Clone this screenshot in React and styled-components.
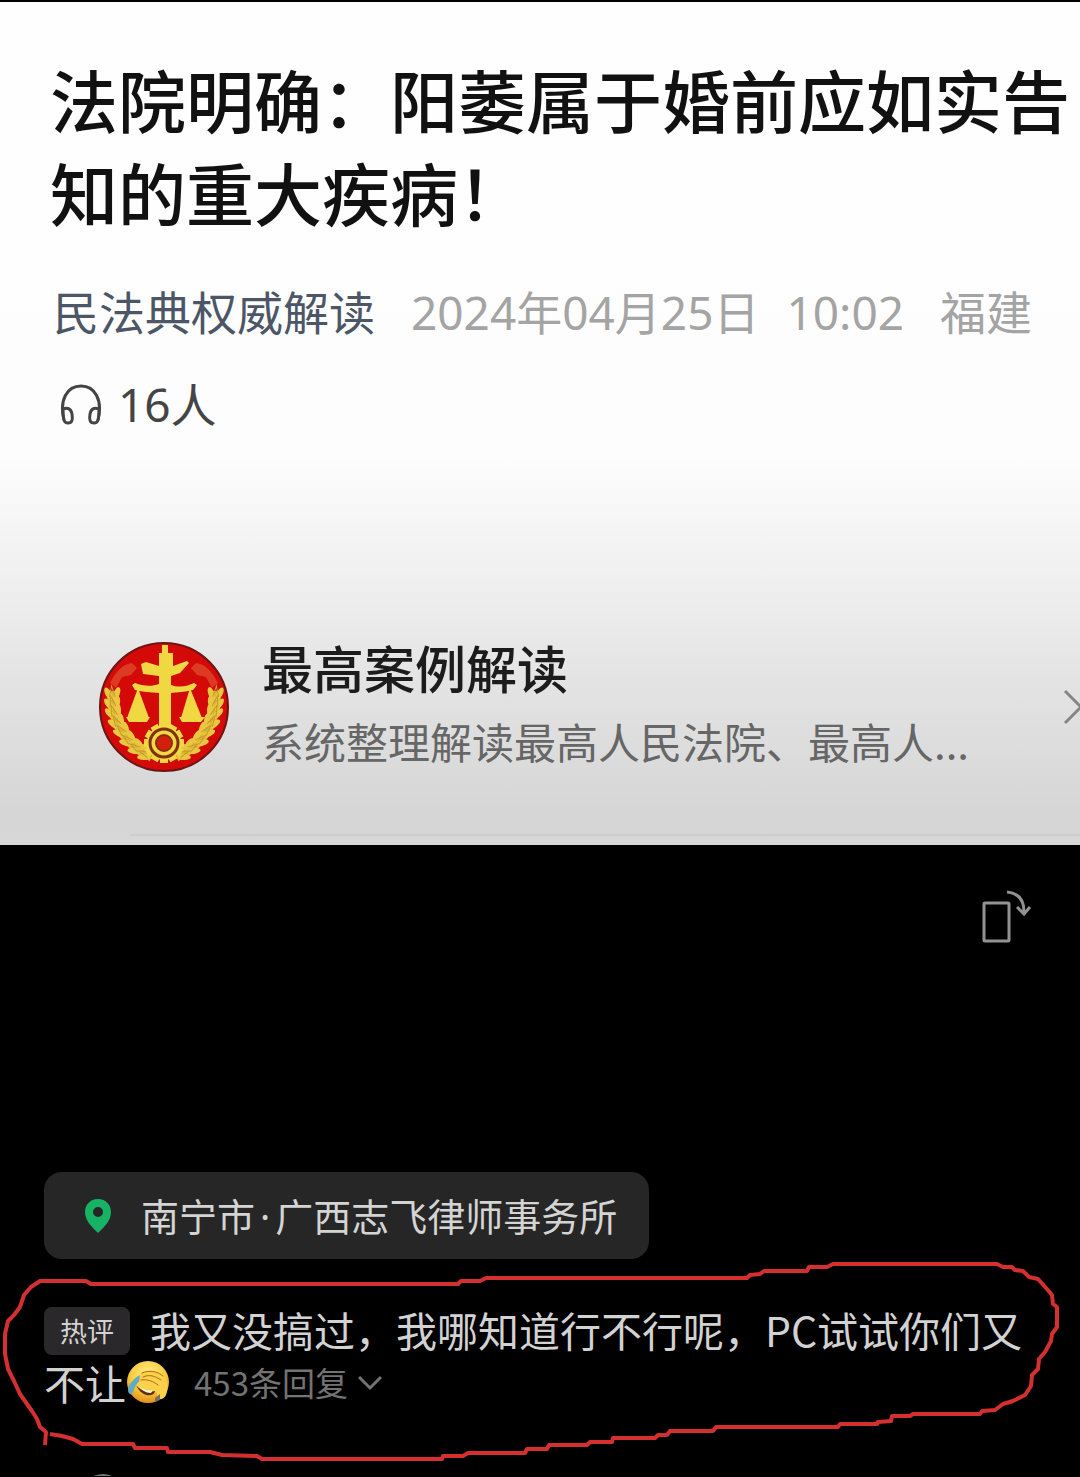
import styled, { createGlobalStyle } from 'styled-components';

function Emblem() {
    const leaves = [
        [14, 51, -4], [14, 61, -12], [15, 70, -20], [18, 80, -30],
        [23, 89, -40], [29, 98, -50], [37, 106, -58], [46, 112, -68],
    ];
    const teeth = [0, 30, 60, 90, 120, 150, 180, 210, 240, 270, 300, 330];
    const wheat = (
        <>
            <path d="M15 50C13 75 24 102 54 115" fill="none" stroke="#d9b236" strokeWidth="11" />
            {leaves.map(([x, y, r]) => (
                <g key={y} transform={`translate(${x} ${y}) rotate(${r})`}>
                    <ellipse cx="-4" cy="0" rx="3" ry="7" transform="rotate(-24)" />
                    <ellipse cx="5" cy="0" rx="3" ry="7" transform="rotate(24)" />
                    <path d="M-3 5L0 -6L3 5" fill="none" stroke="#c9982a" strokeWidth="1" />
                </g>
            ))}
        </>
    );
    return (
        <EmblemSvg viewBox="0 0 132 132" aria-hidden="true">
            <circle cx="66" cy="66" r="64" fill="#d30a08" stroke="#6d1414" strokeWidth="2" />
            <path d="M12 42C18 30 25 23 34 22L39 27L33 34L24 36L18 47Z" fill="#dc3a22" />
            <path d="M120 42C114 30 107 23 98 22L93 27L99 34L108 36L114 47Z" fill="#dc3a22" />
            <g fill="#e8c840">
                {wheat}
                <g transform="translate(132 0) scale(-1 1)">{wheat}</g>
            </g>
            <g fill="#f0d843">
                <path d="M64 4H70V12H75V25L89 20L91 22L82 32L73 35V44C82 47 90 45 96 42L99 44L95 49C87 51 79 51 73 52V90H61V52C53 51 44 51 37 49L34 44L37 42C45 45 53 46 61 43V35L45 33L43 23L48 21L61 25V12H64Z" />
                <path d="M40 47L51 77H29Z" />
                <path d="M92 47L104 77H83Z" />
                <path d="M28 76H52L49 81H31Z" />
                <path d="M81 76H107L103 81H84Z" />
            </g>
            <g fill="#f0d843">
                {teeth.map((a) => (
                    <rect key={a} x="62" y="82" width="8" height="8" transform={`rotate(${a} 66 102)`} />
                ))}
                <circle cx="66" cy="102" r="17" />
            </g>
            <circle cx="66" cy="102" r="14" fill="none" stroke="#80300f" strokeWidth="3" />
            <circle cx="66" cy="102" r="8" fill="#d3200c" stroke="#8c2b10" strokeWidth="2" />
        </EmblemSvg>
    );
}

function FacepalmEmoji() {
    return (
        <EmojiSvg viewBox="0 0 44 44" role="img" aria-label="捂脸">
            <defs>
                <radialGradient id="face" cx="50%" cy="30%" r="70%">
                    <stop offset="0" stopColor="#ffec83" />
                    <stop offset="0.6" stopColor="#f9cb3d" />
                    <stop offset="1" stopColor="#e48e1b" />
                </radialGradient>
            </defs>
            <circle cx="22" cy="22" r="21" fill="url(#face)" />
            <path d="M10 25C14 30 20 33 29 31C28 38 15 37 10 25Z" fill="#5c2f0e" />
            <path d="M13 26C17 30 22 31 27 30L25 33C19 33 16 30 13 26Z" fill="#fff3d6" />
            <path d="M14 15C7 19 2 25 2 30C2 33 4 35 6 34L10 25L16 18Z" fill="#62a9c5" />
            <path d="M14 14C20 9 30 10 36 14C42 19 43 28 40 35C38 39 34 41 31 37C33 30 24 28 13 23Z" fill="#fbd04a" />
            <path d="M16 13C23 10 31 11 37 16M17 17C23 14 29 16 35 20M15 20C21 19 27 21 32 25" fill="none" stroke="#a86f1c" strokeWidth="1" strokeLinecap="round" />
            <path d="M29 38L34 34L34 40L29 42Z" fill="#77705a" />
        </EmojiSvg>
    );
}

function Scribble() {
    return (
        <ScribbleSvg viewBox="0 0 1080 217" preserveAspectRatio="none" aria-hidden="true">
            <path d="M45 186L46 173L40 168L37 160L32 152L27 145L20 135L14 122L8 110L5 95V75L8 62L14 56L20 48L24 36L31 28L40 22H86L91 25H458L461 22H480L486 19H747L750 16L760 15L764 12H807L809 8H827L833 5H997L1003 8H1012L1015 11L1023 12L1029 18L1038 20L1047 30L1052 36L1053 45L1057 48V68L1052 75L1051 82L1045 93L1039 100L1038 110L1032 116L1031 127L1025 136L1013 142L1003 145L995 151L982 152L980 155H913L910 157H892L891 162L878 163L877 165H840L838 168H716L713 172H670L667 176H658L655 179H613L612 183H590L587 186H549L547 190H527L525 194H468L463 197H443L442 200H262L257 197L222 196L210 193H168L167 189H135L133 185H82L73 180L62 177L50 175" />
        </ScribbleSvg>
    );
}

function Article() {
    return (
        <ArticleBox>
            <Title>法院明确：阳萎属于婚前应如实告知的重大疾病！</Title>
            <Meta>
                <Author href="#author">民法典权威解读</Author>
                <Time>
                    <span>2024年04月25日</span>
                    <span>10:02</span>
                </Time>
                <span>福建</span>
            </Meta>
            <Listen type="button">
                <svg width="42" height="42" viewBox="0 0 42 42" fill="none" stroke="currentColor" strokeWidth="3" aria-hidden="true">
                    <path d="M4 37C-1 17 7 3 21 3S43 17 38 37" />
                    <path d="M3 26C8 24 11 26 12 31C13 37 12 40 8 40C4 40 3 37 3 26Z" />
                    <path d="M39 26C34 24 31 26 30 31C29 37 30 40 34 40C38 40 39 37 39 26Z" />
                </svg>
                16人
            </Listen>
            <Album href="#album">
                <Emblem />
                <AlbumText>
                    <AlbumName>最高案例解读</AlbumName>
                    <AlbumDesc>系统整理解读最高人民法院、最高人...</AlbumDesc>
                </AlbumText>
                <svg width="18" height="36" viewBox="0 0 18 36" fill="none" stroke="#858585" strokeWidth="3" aria-hidden="true">
                    <path d="M3 2L19 18L3 34" />
                </svg>
            </Album>
            <Divider />
        </ArticleBox>
    );
}

function App() {
    return (
        <Page>
            <Global />
            <Article />
            <Viewer>
                <RotateButton type="button" aria-label="旋转">
                    <svg width="52" height="56" viewBox="0 0 52 56" fill="none" stroke="currentColor" strokeWidth="3" aria-hidden="true">
                        <rect x="4" y="14" width="25" height="38" rx="1" />
                        <path d="M27 3C38 4 44 11 44 23M37 18L44 25L50 18" />
                    </svg>
                </RotateButton>
                <Place href="#place">
                    <svg width="28" height="36" viewBox="0 0 28 36" aria-hidden="true">
                        <path fillRule="evenodd" fill="#17b263" d="M14 1C6 1 1 7 1 14C1 23 8 29 14 35C20 29 27 23 27 14C27 7 22 1 14 1ZM14 9A5 5 0 1 1 14 19A5 5 0 1 1 14 9Z" />
                    </svg>
                    <span>南宁市<Dot>·</Dot>广西志飞律师事务所</span>
                </Place>
            </Viewer>
            <CommentBox>
                <Comment>
                    <HotTag>热评</HotTag>
                    我又没搞过，我哪知道行不行呢，PC试试你们又不让
                    <FacepalmEmoji />
                    <Replies type="button">
                        453条回复
                        <svg width="24" height="16" viewBox="0 0 24 16" fill="none" stroke="currentColor" strokeWidth="3" aria-hidden="true">
                            <path d="M1 2L12 13L23 2" />
                        </svg>
                    </Replies>
                </Comment>
                <NextRow><NextAvatar /></NextRow>
                <Scribble />
            </CommentBox>
        </Page>
    );
}

const Global = createGlobalStyle`
    * { box-sizing: border-box; }
    body {
        margin: 0;
        background: #000;
        font-family: "Noto Sans CJK SC", sans-serif;
    }
    a { color: inherit; text-decoration: none; }
    button {
        padding: 0;
        border: 0;
        background: none;
        font-family: inherit;
    }
    svg { flex-shrink: 0; }
`

const Page = styled.div`
    border-top: 2px solid #000;
    overflow: hidden;
`

const ArticleBox = styled.article`
    padding: 50px 0 9px;
    background: linear-gradient(#fefefe 0, #fdfdfd 54%, #f2f2f2 66%, #e4e4e5 80%, #d7d6d6 96%, #d8d7d7 100%);
`

const Title = styled.h1`
    margin: 0;
    padding: 0 4px 0 50px;
    font-size: 68px;
    line-height: 93px;
    font-weight: 500;
    color: #111;
`

const Meta = styled.div`
    display: flex;
    align-items: baseline;
    gap: 36px;
    padding: 42px 0 0 53px;
    font-size: 46px;
    line-height: 60px;
    white-space: nowrap;
    color: #a4a4a4;
`

const Author = styled.a`
    color: #4c5666;
`

const Time = styled.time`
    display: flex;
    gap: 27px;
    font-family: "Noto Sans", "Noto Sans CJK SC", sans-serif;
`

const Listen = styled.button`
    display: flex;
    align-items: center;
    gap: 16px;
    margin: 32px 0 0 60px;
    font-family: "Noto Sans", "Noto Sans CJK SC", sans-serif;
    font-size: 46px;
    line-height: 60px;
    color: #444;
`

const Album = styled.a`
    display: flex;
    align-items: center;
    padding: 196px 0 0 98px;
`

const EmblemSvg = styled.svg`
    width: 132px;
    height: 132px;
`

const AlbumText = styled.div`
    flex: 1;
    padding: 0 0 6px 32px;
    white-space: nowrap;
`

const AlbumName = styled.div`
    font-size: 51px;
    line-height: 74px;
    font-weight: 500;
    color: #1c1c1c;
`

const AlbumDesc = styled.div`
    font-size: 42px;
    line-height: 74px;
    color: #666;
`

const Divider = styled.hr`
    height: 2px;
    margin: 50px 0 0 130px;
    border: 0;
    background: #cfcdcd;
`

const Viewer = styled.section`
    display: flex;
    flex-direction: column;
    align-items: flex-start;
    padding: 44px 44px 0;
`

const RotateButton = styled.button`
    display: flex;
    align-self: flex-end;
    margin-right: 4px;
    color: #929292;
`

const Place = styled.a`
    display: flex;
    align-items: center;
    gap: 29px;
    margin-top: 227px;
    padding: 0 32px 0 40px;
    border-radius: 18px;
    background: #262626;
    font-size: 38px;
    line-height: 86px;
    color: #d4d4d4;
`

const Dot = styled.span`
    padding: 0 5px;
    font-family: "Noto Sans", sans-serif;
`

const CommentBox = styled.section`
    position: relative;
    padding-top: 44px;
`

const Comment = styled.p`
    margin: 0;
    padding: 0 44px;
    font-size: 41px;
    line-height: 53px;
    color: #d2d2d2;
`

const HotTag = styled.span`
    display: inline-block;
    margin: 4px 20px 0 0;
    padding: 0 16px;
    border-radius: 8px;
    background: #2b282b;
    font-size: 27px;
    line-height: 48px;
    vertical-align: top;
`

const EmojiSvg = styled.svg`
    width: 44px;
    height: 44px;
    margin-top: 4px;
    vertical-align: top;
`

const Replies = styled.button`
    display: inline-flex;
    align-items: center;
    gap: 10px;
    margin-left: 24px;
    font-size: 33px;
    line-height: 53px;
    vertical-align: top;
    color: #737373;
`

const NextRow = styled.div`
    height: 2px;
    margin-top: 65px;
    padding-left: 82px;
    overflow: hidden;
`

const NextAvatar = styled.div`
    width: 42px;
    height: 42px;
    border-radius: 50%;
    background: #777;
`

const ScribbleSvg = styled.svg`
    position: absolute;
    top: 0;
    left: 0;
    width: 100%;
    height: 217px;
    pointer-events: none;
    fill: none;
    stroke: #d3302f;
    stroke-width: 4px;
    stroke-linejoin: round;
`

export default App;
